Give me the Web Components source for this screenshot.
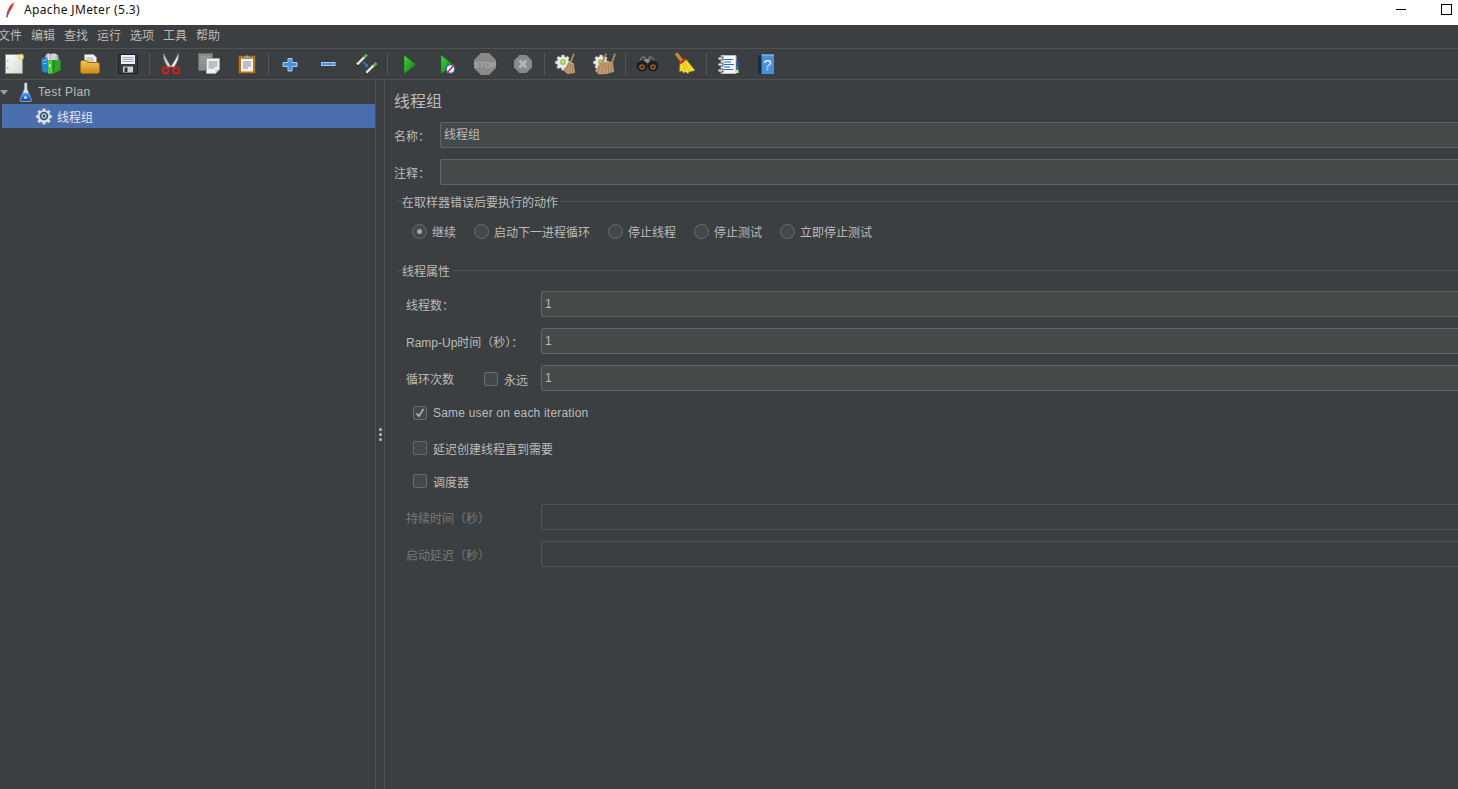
<!DOCTYPE html>
<html lang="zh"><head><meta charset="utf-8"><title>Apache JMeter (5.3)</title>
<style>
html,body{margin:0;padding:0;height:100%;overflow:hidden;background:#3c3f41}
body{font:12px "Liberation Sans","Noto Sans CJK SC",sans-serif;color:#bbb}
</style></head><body>
<jm-window>
  <jm-titlebar slot="title">Apache JMeter (5.3)</jm-titlebar>
  <jm-menubar slot="menu">
    <jm-menu>文件</jm-menu><jm-menu>编辑</jm-menu><jm-menu>查找</jm-menu><jm-menu>运行</jm-menu><jm-menu>选项</jm-menu><jm-menu>工具</jm-menu><jm-menu>帮助</jm-menu>
  </jm-menubar>
  <jm-toolbar slot="tools" icons="new templates open save | cut copy paste | plus minus toggle | start startno stop shutdown | clear clearall | search reset | func help"></jm-toolbar>
  <jm-split slot="main">
    <jm-tree slot="left">
      <jm-node icon="flask" arrow style="letter-spacing:.35px">Test Plan</jm-node>
      <jm-node icon="gear" indent selected>线程组</jm-node>
    </jm-tree>
    <jm-form slot="right">
      <jm-heading>线程组</jm-heading>
      <jm-field label="名称：" lw="46" value="线程组" top="9" lx="0"></jm-field>
      <jm-field label="注释：" lw="46" top="11" lx="0"></jm-field>
      <jm-group title="在取样器错误后要执行的动作" top="9">
        <jm-choices>
          <jm-radio checked w="62">继续</jm-radio>
          <jm-radio w="134">启动下一进程循环</jm-radio>
          <jm-radio w="86">停止线程</jm-radio>
          <jm-radio w="86">停止测试</jm-radio>
          <jm-radio w="110">立即停止测试</jm-radio>
        </jm-choices>
      </jm-group>
      <jm-group title="线程属性" top="24">
        <jm-field label="线程数：" lw="144" value="1" top="14" lx="9"></jm-field>
        <jm-field label="Ramp-Up时间（秒）：" lw="144" value="1" top="11" lx="9"></jm-field>
        <jm-field label="循环次数" lw="144" value="1" top="11" lx="9"><jm-check style="--cx:87px">永远</jm-check></jm-field>
        <jm-check checked top="15" left="16" style="letter-spacing:.2px">Same user on each iteration</jm-check>
        <jm-check top="21" left="16">延迟创建线程直到需要</jm-check>
        <jm-check top="19" left="16">调度器</jm-check>
        <jm-field label="持续时间（秒）" lw="144" top="16" lx="9" disabled></jm-field>
        <jm-field label="启动延迟（秒）" lw="144" top="11" lx="9" disabled></jm-field>
      </jm-group>
    </jm-form>
  </jm-split>
</jm-window>
<script>
const ICONS={
new:`<defs><linearGradient id="a" x1="0" y1="0" x2="1" y2="1"><stop offset="0" stop-color="#fff"/><stop offset="1" stop-color="#d5d5d0"/></linearGradient><radialGradient id="g"><stop offset="0" stop-color="#fff3a0"/><stop offset=".55" stop-color="#ecd466"/><stop offset="1" stop-color="#ecd466" stop-opacity="0"/></radialGradient></defs><rect x="3.500" y="2.500" width="17" height="19" fill="url(#a)" stroke="#8d8d8a"/><rect x="5" y="8" width="1.400" height="1.400" fill="#999"/><rect x="5" y="15" width="1.400" height="1.400" fill="#999"/><circle cx="19" cy="5" r="3.800" fill="url(#g)"/>`,
templates:`<path d="M5 4l3-3 3 1 3-1 4 2 1 7H6z" fill="#b5bcc0"/><path d="M8 2l1 7M12 2v7M15 2l-1 7" stroke="#e8ecec" stroke-width="1.200"/><path d="M1.500 6.500L6 5l2 3v12l-3 1-3-2z" fill="#1f83cf"/><path d="M2.500 9L7 8M2.500 12L7 11" stroke="#7cc4f2"/><path d="M8 8h12.500v10L14 21.500H8z" fill="#2ea52a"/><path d="M8 8h4v13.500H8z" fill="#53c94a"/><path d="M14 8v13" stroke="#1a7a1c"/><rect x="9" y="12" width="1.500" height="3" fill="#d6f5d0"/>`,
open:`<defs><linearGradient id="f" x1="0" y1="0" x2="0" y2="1"><stop offset="0" stop-color="#f6c75a"/><stop offset="1" stop-color="#c98a18"/></linearGradient></defs><path d="M6.500 2.500h9l3 3v9h-12z" fill="#f4f4f2" stroke="#9b9b98"/><path d="M8 6h7M8 8h8M8 10h8" stroke="#a8a8a6"/><path d="M2.500 10.500q0-2 2-2h4l1 2h10q2 0 2 2v7q0 2-2 2h-15q-2 0-2-2z" fill="url(#f)" stroke="#9a6d14"/>`,
save:`<path d="M3 2.500h17l1.500 1.500v17.500h-19z" fill="#36383a" stroke="#1c1d1f"/><rect x="5" y="3" width="14" height="9" fill="#eef1f4"/><path d="M6.500 5.500h11M6.500 7.500h11M6.500 9.500h11" stroke="#8fa8c4"/><rect x="7" y="14.500" width="10" height="6" fill="#cfd1d2"/><rect x="8.500" y="15.500" width="3" height="4.500" fill="#2f3133"/>`,
cut:`<path d="M5 1.500C6 5.500 9.500 10.500 12 14.500L9.500 16C7 12 3.500 7 5 1.500z" fill="#cfd0d0" stroke="#7d7d7d" stroke-width=".6"/><path d="M19 1.500C18 5.500 14.500 10.500 12 14.500L14.500 16C17 12 20.500 7 19 1.500z" fill="#f2f2f2" stroke="#7d7d7d" stroke-width=".6"/><path d="M10.500 15L8.500 17M13.500 15L15.500 17" stroke="#c41e1e" stroke-width="2.200"/><circle cx="6.800" cy="18.500" r="2.900" fill="none" stroke="#cf1f1f" stroke-width="2"/><circle cx="17.200" cy="18.500" r="2.900" fill="none" stroke="#cf1f1f" stroke-width="2"/>`,
copy:`<rect x="1.500" y="1.500" width="14" height="17" fill="#8b8d8d" stroke="#6a6c6c"/><path d="M3.500 5h10M3.500 8h10M3.500 11h10" stroke="#a2a4a4"/><path d="M9.500 6.500h13v11l-4 4h-9z" fill="#f2f2f0" stroke="#a5a5a3"/><path d="M18.500 21.500v-4h4z" fill="#c8c8c6"/><path d="M11.500 10h9M11.500 12h9M11.500 14h9M11.500 16h6" stroke="#8e8e8e"/>`,
paste:`<rect x="3.500" y="3.500" width="17" height="18" rx="1" fill="#b5732a" stroke="#6d4413"/><path d="M6 6.500h12v13H6z" fill="#f1f1ee"/><path d="M8 10h8M8 12h8M8 14h8M8 16h5" stroke="#8e8e8e"/><path d="M8.500 6.500V4.500h2q1.500-3 3 0h2v2z" fill="#a5a7a8" stroke="#6e7071" stroke-width=".6"/>`,
plus:`<path d="M10 6.500h4v4h5v4h-5v4.500h-4v-4.500H5v-4h5z" fill="#4a8fdb" stroke="#a9cdf2" stroke-width="1"/>`,
minus:`<rect x="5.500" y="10.500" width="13.500" height="3" fill="#4a8fdb" stroke="#a9cdf2"/>`,
toggle:`<path d="M3 12.500L11 4.500" stroke="#e8e8e4" stroke-width="2.400"/><path d="M2.500 13L4 14.500" stroke="#1f1f1f" stroke-width="1.200"/><path d="M10 5.500L13 2.500" stroke="#5fae52" stroke-width="2.800"/><path d="M12 21L20 13" stroke="#e8e8e4" stroke-width="2.400"/><path d="M11 20.500L12.500 22" stroke="#1f1f1f" stroke-width="1.200"/><path d="M19.500 14L22.500 11" stroke="#5fae52" stroke-width="2.800"/><path d="M9 10l4 3.500" stroke="#2c7fe0" stroke-width="1.600"/><path d="M14.500 15l-3.800-.5 2.800-2.600z" fill="#2c7fe0"/>`,
start:`<defs><linearGradient id="a" x1="0" y1="0" x2="1" y2="1"><stop offset="0" stop-color="#48d43c"/><stop offset="1" stop-color="#087a10"/></linearGradient></defs><path d="M7 3l12 9.500L7 22z" fill="url(#a)" stroke="#0b6a12" stroke-width=".5"/>`,
startno:`<defs><linearGradient id="a" x1="0" y1="0" x2="1" y2="1"><stop offset="0" stop-color="#48d43c"/><stop offset="1" stop-color="#087a10"/></linearGradient></defs><path d="M6 3l12 9.500L6 22z" fill="url(#a)" stroke="#0b6a12" stroke-width=".5"/><circle cx="15.500" cy="17" r="4.300" fill="#f1f4f8" stroke="#2a62b8" stroke-width="1.300"/><path d="M11.500 21.500l8-9" stroke="#d8252a" stroke-width="1.300"/>`,
stop:`<path d="M8 1h8l7 7v8l-7 7H8l-7-7V8z" fill="#8a8a8a"/><text x="12" y="15.500" text-anchor="middle" font-family="Liberation Sans" font-weight="700" font-size="8.500" fill="#ababab">STOP</text>`,
shutdown:`<path d="M8.500 3h7l5.500 5.500v7L15.500 21h-7L3 15.500v-7z" fill="#8a8a8a"/><path d="M8.500 8.500l7 7M15.500 8.500l-7 7" stroke="#b5b5b5" stroke-width="3"/>`,
clear:`<use href="#gear"/><path d="M20 1.500l-3.500 9" stroke="#a8845e" stroke-width="2"/><path d="M15 9l5 2.500L21 21l-7.500 1-3.500-3z" fill="#c09a70"/><path d="M14.500 11l-2.500 10M16.500 12l-1 9.500M18.500 12l0 9" stroke="#a07c55" stroke-width=".8"/>`,
clearall:`<use href="#gear"/><path d="M23 1.500l-3 9" stroke="#a8845e" stroke-width="2"/><path d="M14 1.500l-3.500 9" stroke="#a8845e" stroke-width="2"/><path d="M9 9l5 1 2-1 5 1.500L22 20l-5 1-2 1-8 .500L3 19z" fill="#c09a70"/><path d="M9 11l-3 10M11.500 11l-2 10.500M14 11l-.5 10.500M17 11l-.5 9.500M19.500 11l0 9" stroke="#a07c55" stroke-width=".8"/>`,
search:`<path d="M6 6q2-2 4-1v6H4zM18 6q-2-2-4-1v6h6z" fill="#4a4a4a" stroke="#a8a8a8" stroke-width=".6"/><rect x="10" y="7" width="4" height="4" fill="#8f8f8f"/><circle cx="7" cy="14" r="5.500" fill="#1f1f1f"/><circle cx="18" cy="14" r="5.500" fill="#1f1f1f"/><circle cx="7" cy="15" r="2.800" fill="#9a5a2a"/><circle cx="18" cy="15" r="2.800" fill="#9a5a2a"/><circle cx="7" cy="15" r="1.300" fill="#3a2416"/><circle cx="18" cy="15" r="1.300" fill="#3a2416"/>`,
reset:`<path d="M4 2.500L9 9" stroke="#c48a2c" stroke-width="3.500" stroke-linecap="round"/><path d="M7 10.500l5.500-4L22 18.500 16 20l-1 2-2-2-3 1-.5-2-3 .5z" fill="#f3dd2e" stroke="#9c8a14" stroke-width=".5"/><path d="M6.500 10.500l6-4.500 1.200 1.700-6 4.500z" fill="#d4262a"/><path d="M12 11l4 8M10 12l2 7" stroke="#c6aa1e" stroke-width=".7"/>`,
func:`<path d="M5 3.500h15v18H5z" fill="#f7f7f7" stroke="#bdbdbd"/><rect x="20" y="10" width="2.500" height="5" fill="#2a5fb8"/><rect x="20" y="15" width="2.500" height="3" fill="#2d9a35"/><rect x="20" y="18" width="2.500" height="3" fill="#d8d8d8"/><path d="M8 7.500h9M8 10h7M8 12.500h10M8 15h6M8 17.500h9" stroke="#2a6fd0" stroke-width="1.100"/><rect x="2" y="5" width="5" height="3" fill="#e8e8e8" stroke="#333" stroke-width=".8"/><rect x="2" y="11" width="5" height="3" fill="#e8e8e8" stroke="#333" stroke-width=".8"/><rect x="2" y="17" width="5" height="3" fill="#e8e8e8" stroke="#333" stroke-width=".8"/>`,
help:`<rect x="4" y="2.500" width="16" height="19.500" rx="1" fill="#4a8ee0"/><rect x="4" y="2.500" width="3.500" height="19.500" rx="1" fill="#1d2a3a"/><rect x="7.500" y="2.500" width="12.500" height="1" fill="#9cc5f2"/><text x="13.500" y="18" text-anchor="middle" font-family="Liberation Sans" font-size="15" fill="#e8f1fb">?</text>`,
flask:`<defs><linearGradient id="f" x1="0" y1="0" x2="0" y2="1"><stop offset="0" stop-color="#4aa4ff"/><stop offset="1" stop-color="#1143b8"/></linearGradient></defs><path d="M10.500 3h2.500v6l4.500 10.500q.5 2-1.500 2H7.500q-2 0-1.500-2L10.500 9z" fill="#dfe3e8" stroke="#a6acb4" stroke-width=".5"/><path d="M9 13h5.500l2.700 6.500q0 1.500-1.700 1.500h-7.500q-1.700 0-1.700-1.500z" fill="url(#f)"/><circle cx="11.500" cy="17.500" r="1.300" fill="#dff0ff"/>`,
gear:`<g transform="translate(2.600 2.600) scale(.78)"><path d="M10.400 2.500h3.200l.5 2.600 1.800.7 2.200-1.500 2.300 2.300-1.500 2.200.7 1.800 2.600.5v3.200l-2.600.5-.7 1.800 1.500 2.200-2.300 2.300-2.200-1.500-1.800.7-.5 2.600h-3.200l-.5-2.600-1.800-.7-2.200 1.500-2.300-2.300 1.500-2.200-.7-1.800-2.600-.5v-3.200l2.600-.5.7-1.800-1.500-2.200 2.300-2.300 2.200 1.500 1.800-.7z" fill="#dfe2e5" stroke="#9aa0a6" stroke-width=".5"/><circle cx="12" cy="12" r="5.500" fill="#35506f"/><circle cx="12" cy="12" r="3.400" fill="#a9c4e2"/><circle cx="12" cy="12" r="1.600" fill="#2c4e78"/></g>`
};
const GEARDEF=`<defs><g id="gear"><g transform="translate(0 1) scale(.75)"><path d="M10.400 2.500h3.200l.5 2.600 1.800.7 2.200-1.500 2.300 2.300-1.500 2.200.7 1.800 2.600.5v3.200l-2.600.5-.7 1.800 1.500 2.200-2.300 2.300-2.200-1.500-1.800.7-.5 2.600h-3.200l-.5-2.600-1.800-.7-2.200 1.500-2.300-2.300 1.500-2.200-.7-1.800-2.600-.5v-3.200l2.600-.5.7-1.800-1.500-2.200 2.300-2.300 2.200 1.500 1.800-.7z" fill="#e8e8e8" stroke="#bdbdbd" stroke-width=".5"/><circle cx="12" cy="12" r="3.800" fill="#8bc34a"/><circle cx="12" cy="12" r="1.800" fill="#d8f0a8"/></g></g></defs>`;
function def(name,css,html,extra){
  customElements.define(name,class extends HTMLElement{
    connectedCallback(){
      if(this.shadowRoot)return;
      const r=this.attachShadow({mode:'open'});
      const body=typeof html==='function'?html(this):html;
      r.innerHTML=`<style>${css}</style>${body}`;
      if(extra)extra(this,r);
    }
  });
}
def('jm-icon',':host{display:block;width:24px;height:24px}svg{display:block}',
  h=>{const n=h.getAttribute('name');return `<svg xmlns="http://www.w3.org/2000/svg" width="24" height="24" viewBox="0 0 24 24" shape-rendering="geometricPrecision">${/clear/.test(n)?GEARDEF:''}${ICONS[n]||''}</svg>`});
def('jm-window',':host{display:flex;flex-direction:column;width:1458px;height:789px;overflow:hidden;background:#3c3f41}',
  '<slot name="title"></slot><slot name="menu"></slot><slot name="tools"></slot><slot name="main"></slot>');
def('jm-titlebar',`:host{display:flex;align-items:center;height:25px;flex:none;background:#fff;color:#111;font:12px "Noto Sans","Liberation Sans",sans-serif}
 .logo{margin:0 8px 6px 4px;display:block}.t{flex:1;padding-bottom:7px;letter-spacing:.36px}
 .min{width:10px;height:1px;background:#000;margin:0 35px 7px 0}.max{width:9px;height:9px;border:1px solid #000;margin:0 6px 7px 0}`,
 `<svg class="logo" width="12" height="16" viewBox="0 0 12 16"><path d="M9.500 0.500C7 2 4.500 5.500 3.500 9l2 1C7.500 7 9.500 4 10 0.800z" fill="#d8382a"/><path d="M3.500 9l2 1-1 2.500-2 .5z" fill="#7a2f6a"/><path d="M2.500 13l2-.5-.8 2.500-1.700.5z" fill="#b03a5a"/><path d="M8 2l2-1.500L9.500 3z" fill="#f0a030"/></svg><span class="t"><slot></slot></span><span class="min"></span><span class="max"></span>`);
def('jm-menubar',':host{display:flex;height:23px;flex:none;align-items:center;gap:9px;border-bottom:1px solid #515151;margin-left:-2px}','<slot></slot>');
def('jm-menu',':host{display:block;color:#bbb;line-height:23px}','<slot></slot>');
def('jm-tb-sep',':host{display:flex;justify-content:center;width:5px;flex:none}i{display:block;width:1px;height:22px;margin-top:4px;background:#555}','<i></i>');
def('jm-tb-btn',':host{display:flex;justify-content:center;padding-top:3px;width:38px;flex:none;box-sizing:border-box}',
  h=>`<jm-icon name="${h.getAttribute('icon')}"></jm-icon>`);
def('jm-toolbar',':host{display:flex;height:30px;flex:none;border-bottom:1px solid #515151;margin-left:-5px}',
  h=>h.getAttribute('icons').split(' ').map(n=>n==='|'?'<jm-tb-sep></jm-tb-sep>':`<jm-tb-btn icon="${n}"></jm-tb-btn>`).join(''));
def('jm-split',`:host{display:flex;flex:1;min-height:0}
 .l{width:375px;flex:none;border-right:1px solid #515151}
 .d{width:8px;flex:none;display:flex;flex-direction:column;align-items:center;justify-content:center;gap:2px;border-right:1px solid #515151}
 .d i{display:block;width:3px;height:3px;border-radius:50%;background:#bbb}
 .r{flex:1;min-width:0}`,
 '<div class="l"><slot name="left"></slot></div><div class="d"><i></i><i></i><i></i></div><div class="r"><slot name="right"></slot></div>');
def('jm-tree',':host{display:block}','<slot></slot>');
def('jm-node',`:host{display:flex;align-items:center;height:24px;position:relative}
 :host([selected]){background:#4b6eaf;color:#e6e6e6;margin-left:2px}
 .a{width:0;height:0;border:4.500px solid transparent;border-top:5.500px solid #9a9c9e;border-bottom:0;margin:1px 5px 0 0}
 :host([arrow]) jm-icon{margin:0 0 0 1px}
 :host([indent]) jm-icon{margin:0 1px 0 30px}`,
 h=>`${h.hasAttribute('arrow')?'<i class="a"></i>':''}<jm-icon name="${h.getAttribute('icon')}"></jm-icon><span><slot></slot></span>`);
def('jm-form',':host{display:block;padding:11px 0 0 9px}','<slot></slot>');
def('jm-heading',':host{display:block;font-size:16px;line-height:22px;color:#bbb}','<slot></slot>');
def('jm-group',`:host{display:block;margin-left:3px}
 .h{display:flex;align-items:center;height:14px;margin-right:-10px}
 .h::before{content:"";width:5px;height:1px;background:#515151}
 .h::after{content:"";flex:1;height:1px;background:#515151;margin-left:2px}
 .h span{padding:0 1px 0 0}`,
 h=>`<div class="h"><span>${h.getAttribute('title')}</span></div><slot></slot>`,
 (h)=>{h.style.marginTop=(h.getAttribute('top')||0)+'px';});
def('jm-choices',':host{display:flex;margin:15px 0 0 15px;height:16px;align-items:center}','<slot></slot>');
def('jm-radio',`:host{display:flex;align-items:center;gap:5px;flex:none;white-space:nowrap}
 i{display:flex;align-items:center;justify-content:center;width:13px;height:13px;border:1px solid #6b6b6b;border-radius:50%;background:#43494a;flex:none}
 :host([checked]) i::after{content:"";width:5px;height:5px;border-radius:50%;background:#a8a8a8}`,
 '<i></i><span><slot></slot></span>',h=>{h.style.width=h.getAttribute('w')+'px'});
def('jm-check',`:host{display:flex;align-items:center;gap:6px;height:14px;white-space:nowrap}
 i{display:block;width:12px;height:12px;border:1px solid #6b6b6b;border-radius:2px;background:#43494a;flex:none;position:relative}
 svg{display:block}`,
 h=>`<i>${h.hasAttribute('checked')?'<svg width="12" height="12" viewBox="0 0 12 12"><path d="M2.500 6.500l2.500 2.500 4.500-7" fill="none" stroke="#a9a9a9" stroke-width="1.800"/></svg>':''}</i><span><slot></slot></span>`,
 h=>{h.style.marginTop=(h.getAttribute('top')||0)+'px';h.style.marginLeft=(h.getAttribute('left')||0)+'px'});
def('jm-field',`:host{display:flex;align-items:center;height:26px;margin-right:-10px}
 .lb{flex:none;white-space:nowrap;display:flex;align-items:center;box-sizing:border-box;height:26px;position:relative}
 .in{flex:1;min-width:0;box-sizing:border-box;height:26px;border:1px solid #646464;border-radius:2px;background:#45494a;padding:0 0 0 3px;line-height:25px;color:#bbb}
 :host([disabled]) .in{background:transparent;border-color:#555}
 :host([disabled]) .lb{color:#777}
 ::slotted(jm-check){position:absolute;left:var(--cx);top:7px}`,
 h=>`<div class="lb" style="width:${h.getAttribute('lw')}px;padding-left:${h.getAttribute('lx')||0}px"><span>${h.getAttribute('label')}</span><slot></slot></div><div class="in">${h.getAttribute('value')||''}</div>`,
 h=>{h.style.marginTop=(h.getAttribute('top')||0)+'px'});
</script>
</body></html>
